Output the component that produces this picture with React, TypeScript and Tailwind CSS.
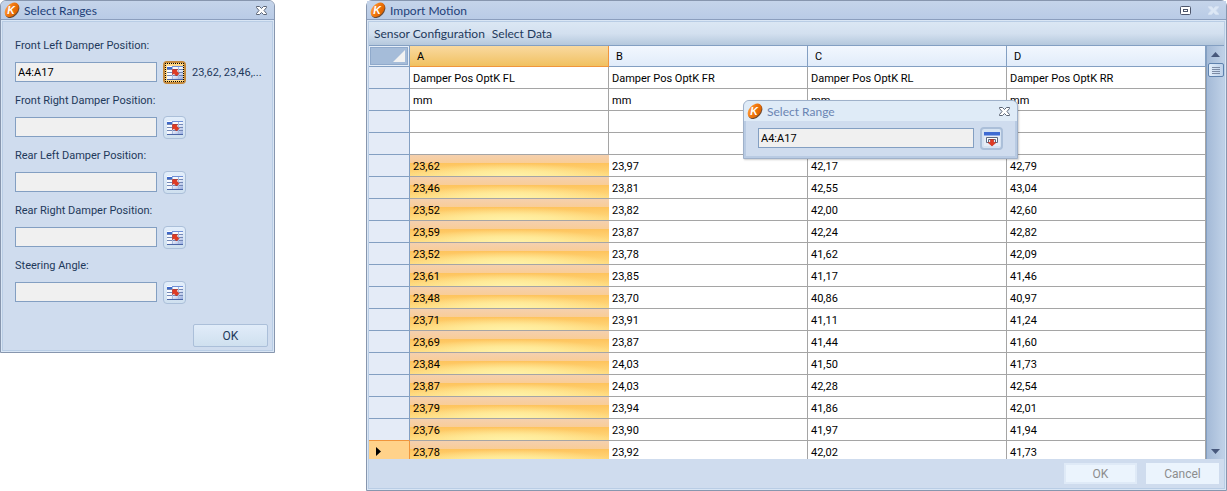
import { useState } from "react";

const columns = ["A", "B", "C", "D"];

const rows: string[][] = [
  ["Damper Pos OptK FL", "Damper Pos OptK FR", "Damper Pos OptK RL", "Damper Pos OptK RR"],
  ["mm", "mm", "mm", "mm"],
  ["", "", "", ""],
  ["", "", "", ""],
  ["23,62", "23,97", "42,17", "42,79"],
  ["23,46", "23,81", "42,55", "43,04"],
  ["23,52", "23,82", "42,00", "42,60"],
  ["23,59", "23,87", "42,24", "42,82"],
  ["23,52", "23,78", "41,62", "42,09"],
  ["23,61", "23,85", "41,17", "41,46"],
  ["23,48", "23,70", "40,86", "40,97"],
  ["23,71", "23,91", "41,11", "41,24"],
  ["23,69", "23,87", "41,44", "41,60"],
  ["23,84", "24,03", "41,50", "41,73"],
  ["23,87", "24,03", "42,28", "42,54"],
  ["23,79", "23,94", "41,86", "42,01"],
  ["23,76", "23,90", "41,97", "41,94"],
  ["23,78", "23,92", "42,02", "41,73"],
];

const FIRST_SELECTED = 4;
const CURRENT = rows.length - 1;

const fields = [
  { id: "fl", label: "Front Left Damper Position:", value: "A4:A17", preview: "23,62, 23,46,..." },
  { id: "fr", label: "Front Right Damper Position:", value: "" },
  { id: "rl", label: "Rear Left Damper Position:", value: "" },
  { id: "rr", label: "Rear Right Damper Position:", value: "" },
  { id: "steer", label: "Steering Angle:", value: "" },
];

function Logo() {
  return (
    <svg className="size-4 shrink-0" viewBox="0 0 16 16" aria-hidden="true">
      <defs>
        <linearGradient id="logo-face" x1="0" y1="0" x2="0.4" y2="1">
          <stop offset="0" stopColor="#ffa544" />
          <stop offset="0.5" stopColor="#f27a12" />
          <stop offset="1" stopColor="#e06400" />
        </linearGradient>
      </defs>
      <ellipse cx="8.4" cy="8.8" rx="8.4" ry="5.6" transform="rotate(-48 8.4 8.8)" fill="#6b4a34" />
      <ellipse cx="7.7" cy="7.8" rx="8.4" ry="5.6" transform="rotate(-48 7.7 7.8)" fill="url(#logo-face)" />
      <text x="3.2" y="11.8" fontSize="10.500" fontWeight="700" fontStyle="italic" fontFamily="Liberation Sans, sans-serif" fill="#fff">
        K
      </text>
    </svg>
  );
}

function CloseGlyph({ faded = false }: { faded?: boolean }) {
  return (
    <svg className="h-[9px] w-[11px]" viewBox="0 0 11 9" aria-hidden="true">
      <path
        d="M.5.5h3l2 2 2-2h3v1L8 4.500l2.500 3v1h-3l-2-2-2 2h-3v-1L3 4.500.5 1.500z"
        fill={faded ? "#dce7f5" : "#fff"}
        stroke={faded ? "#d3dff0" : "#5b6475"}
      />
    </svg>
  );
}

function GridArrowIcon() {
  return (
    <svg className="h-4 w-4" viewBox="0 0 16 16" aria-hidden="true">
      <defs>
        <linearGradient id="grid-shade" x1="0" y1="0" x2="1" y2="1">
          <stop offset="0" stopColor="#ffffff" />
          <stop offset="0.5" stopColor="#f4f7fd" />
          <stop offset="1" stopColor="#8ea4dc" />
        </linearGradient>
      </defs>
      <path d="M0 1h16v14H0z" fill="url(#grid-shade)" />
      <path d="M0 2h5v2H0z" fill="#3e68c8" />
      <path d="M5 1h11v1H5z" fill="#6f8fd6" />
      <path d="M0 4h16v1H0zM0 7h16v1H0zM0 10h16v1H0z" fill="#7388b6" />
      <path d="M0 14h16v1H0z" fill="#4c66a6" />
      <path d="M5 2h1v12H5zM11 2h1v12h-1z" fill="#a9bbdf" />
      <path d="M5.500 4.500h5L9.500 6l2.500 2.500-2.500 2.500L7 8.500l-1.500 1z" fill="#e23a22" stroke="#b92514" strokeWidth=".6" />
    </svg>
  );
}

function RestoreIcon() {
  return (
    <svg className="h-4 w-4" viewBox="0 0 16 16" aria-hidden="true">
      <rect y="1" width="16" height="14" fill="#e6ecf6" />
      <rect y="1" width="16" height="3" fill="#3f6bd2" />
      <rect y="4" width="16" height="1" fill="#8fabeb" />
      <path d="M2.500 11.500v-5h11v5h-2v-3h-7v3z" fill="#fff" stroke="#5d6880" />
      <path d="M6.500 8.500h3v3H12l-4 3.500-4-3.500h2.500z" fill="#e23a22" stroke="#b92514" strokeWidth=".6" />
    </svg>
  );
}

function TitleBar({ title, muted = false, disabled = false }: { title: string; muted?: boolean; disabled?: boolean }) {
  return (
    <header
      className={
        muted
          ? "flex h-5 items-center gap-1 bg-[#dfebf7] pr-[5px] pl-[3px] text-[#6b85b3]"
          : "flex h-[19px] items-center gap-1 border-b border-[#8b9ebd] bg-linear-to-b from-[#c5d4ea] to-[#b9cbe6] pr-[5px] pl-[3px] text-[#1e3f78]"
      }
    >
      <Logo />
      <h2 className="min-w-0 flex-1 truncate pt-0.5 font-['Lato',sans-serif] text-[12px] leading-4">{title}</h2>
      {disabled && (
        <button type="button" aria-label="Maximize" className="mr-2 grid h-4 w-4 place-items-center">
          <svg className="h-[9px] w-[11px]" viewBox="0 0 11 9" aria-hidden="true">
            <rect x=".5" y=".5" width="10" height="8" rx="1" fill="#fff" stroke="#4d566c" />
            <rect x="3.500" y="3.500" width="4" height="2" fill="#fff" stroke="#4d566c" />
          </svg>
        </button>
      )}
      <button type="button" aria-label="Close" disabled={disabled} className="grid h-4 w-4 place-items-center">
        <CloseGlyph faded={disabled} />
      </button>
    </header>
  );
}

function SelectRanges() {
  const [active, setActive] = useState("fl");
  return (
    <section className="w-[275px] shrink-0 overflow-hidden rounded-t-md border border-[#8796ae] bg-[#d9e6f5] text-[#1e395b]">
      <TitleBar title="Select Ranges" />
      <form className="m-px border border-[#b9cde5] bg-[#cfdcee] px-3 pt-4 pb-[3px]" onSubmit={(e) => e.preventDefault()}>
        {fields.map((f) => (
          <div key={f.id} className="h-[55px]">
            <label htmlFor={f.id} className="block h-4 leading-4">
              {f.label}
            </label>
            <div className="mt-[7px] flex items-start">
              <input
                id={f.id}
                readOnly
                defaultValue={f.value}
                className="mt-px h-5 w-[142px] border border-[#839fc2] bg-[#f0f0f0] px-0.5 text-black outline-none"
              />
              <button
                type="button"
                aria-label={"Pick range for " + f.label}
                onClick={() => setActive(f.id)}
                className={
                  active === f.id
                    ? "ml-1.5 grid size-[23px] place-items-center rounded-sm border-2 border-[#c58a3c] bg-[#ffd98a]"
                    : "ml-1.5 grid size-[23px] place-items-center rounded-sm border border-[#abbfd9] bg-linear-to-b from-[#e3eefb] to-[#cfe0ef]"
                }
              >
                <span className={active === f.id ? "grid size-[19px] place-items-center outline-1 -outline-offset-1 outline-dotted outline-black" : ""}>
                  <GridArrowIcon />
                </span>
              </button>
              {f.preview && <output className="ml-1.5 pt-1 whitespace-nowrap">{f.preview}</output>}
            </div>
          </div>
        ))}
        <div className="-mr-2 flex justify-end pt-[11px]">
          <button
            type="submit"
            className="h-[23px] w-[75px] rounded-xs border border-[#abbfd9] bg-linear-to-b from-[#e1ecf9] to-[#cfe0ef] text-[12px]"
          >
            OK
          </button>
        </div>
      </form>
    </section>
  );
}

function MotionTable() {
  return (
    <table className="w-full table-fixed border-separate border-spacing-0 text-left text-black">
      <colgroup>
        <col className="w-[41px]" />
        {columns.map((c) => (
          <col key={c} />
        ))}
      </colgroup>
      <thead>
        <tr className="h-[21px]">
          <th aria-label="Select all" className="border-r border-b border-[#839fc2] bg-[#e6eef8] p-px">
            <div className="flex h-[18px] items-end justify-end border border-[#8fa9cb] bg-[#a5bcd9] p-0.5">
              <svg className="size-3" viewBox="0 0 12 12" aria-hidden="true">
                <path d="M12 0v12H0z" fill="#f2f2f2" />
              </svg>
            </div>
          </th>
          {columns.map((c, i) => (
            <th
              key={c}
              scope="col"
              className={
                i === 0
                  ? "border-r border-b border-[#f0953c] bg-linear-to-b from-[#f9d99f] to-[#f1c15f] p-0 pt-px pl-[7px] font-normal"
                  : "border-r border-b border-[#839fc2] bg-linear-to-b from-[#f2f7fe] to-[#e1ecfa] p-0 pt-px pl-[7px] font-normal"
              }
            >
              {c}
            </th>
          ))}
        </tr>
      </thead>
      <tbody>
        {rows.map((row, r) => (
          <tr key={r} className="h-[22px]">
            <th
              scope="row"
              aria-label={"Row " + r}
              className={
                r === CURRENT
                  ? "border-r border-b border-[#f0953c] bg-[#ffd28a] p-0"
                  : r === CURRENT - 1
                    ? "border-r border-b border-r-[#839fc2] border-b-[#f0953c] bg-[#e4ebf7] p-0"
                    : "border-r border-b border-[#839fc2] bg-[#e4ebf7] p-0"
              }
            >
              {r === CURRENT && (
                <svg className="ml-[7px] h-[9px] w-[5px]" viewBox="0 0 5 9" aria-hidden="true">
                  <path d="M0 0v9l5-4.500z" fill="#000" />
                </svg>
              )}
            </th>
            {row.map((value, c) => (
              <td
                key={c}
                className={
                  c === 0 && r >= FIRST_SELECTED
                    ? "border-b border-[#a5a5a5] bg-[radial-gradient(ellipse_52%_60%_at_50%_100%,#fff2a8_0%,#fff0a2c0_45%,#ffe89000_100%),linear-gradient(to_bottom,#f5d0ae_0px,#f9cd97_8px,#fec35c_8px,#ffdc82_21px)] p-0 pt-0.5 pl-[3px]"
                    : "border-r border-b border-[#a5a5a5] bg-white p-0 pt-0.5 pl-[3px]"
                }
              >
                {value}
              </td>
            ))}
          </tr>
        ))}
      </tbody>
    </table>
  );
}

function ScrollBar() {
  return (
    <div className="flex w-[18px] shrink-0 flex-col items-center border-l border-[#839fc2] bg-linear-to-r from-[#a4bad7] to-[#bfd1e7]">
      <button type="button" aria-label="Scroll up" className="grid h-[17px] w-full place-items-center">
        <svg className="h-[5px] w-[9px]" viewBox="0 0 9 5" aria-hidden="true">
          <path d="M0 5 4.500 0 9 5z" fill="#47587c" />
        </svg>
      </button>
      <div className="flex h-[14px] w-4 flex-col items-center justify-center gap-px rounded-xs border border-[#5f82ae] bg-linear-to-r from-[#e3eefa] to-[#bdd1ea]">
        <i className="h-px w-2 bg-[#7c8ba5]" />
        <i className="h-px w-2 bg-[#7c8ba5]" />
        <i className="h-px w-2 bg-[#7c8ba5]" />
        <i className="h-px w-2 bg-[#7c8ba5]" />
      </div>
      <button type="button" aria-label="Scroll down" className="mt-auto grid h-[15px] w-full place-items-center">
        <svg className="h-[5px] w-[9px]" viewBox="0 0 9 5" aria-hidden="true">
          <path d="M0 0h9L4.500 5z" fill="#47587c" />
        </svg>
      </button>
    </div>
  );
}

function SelectRangePopup() {
  return (
    <section className="absolute top-[99px] left-[376px] w-[275px] overflow-hidden rounded-t-md border border-[#9fb1ca] bg-[#b9cbe3] shadow-[1px_1px_2px_#0003]">
      <TitleBar title="Select Range" muted />
      <div className="mx-0.5 mb-0.5 flex items-start bg-[#cfdcee] px-3 py-[6px]">
        <input
          aria-label="Range"
          readOnly
          defaultValue="A4:A17"
          className="mt-px h-5 min-w-0 flex-1 border border-[#839fc2] bg-[#f0f0f0] px-0.5 text-black outline-none"
        />
        <button
          type="button"
          aria-label="Confirm range"
          className="ml-1.5 grid size-[23px] place-items-center rounded-sm border-2 border-[#abbfd9] bg-[#d6e3f2]"
        >
          <RestoreIcon />
        </button>
      </div>
    </section>
  );
}

function ImportMotion() {
  return (
    <section className="relative flex min-w-0 flex-1 flex-col rounded-t-md border border-[#8796ae] bg-[#d9e6f5] text-[#1e395b]">
      <TitleBar title="Import Motion" disabled />
      <div className="m-px flex min-h-0 flex-1 flex-col border border-[#b9cde5] bg-[#cfdcee]">
        <nav className="flex h-6 shrink-0 items-center gap-[7px] border-b border-[#839fc2] bg-linear-to-b from-[#dbe7f4] via-[#d3e0ef] to-[#b5c8dd] px-[5px] font-['Lato',sans-serif] text-[12px]">
          <button type="button">Sensor Configuration</button>
          <button type="button">Select Data</button>
        </nav>
        <div className="flex min-h-0 flex-1">
          <div className="min-w-0 flex-1 overflow-hidden">
            <MotionTable />
          </div>
          <ScrollBar />
        </div>
        <footer className="flex shrink-0 justify-end gap-[9px] px-[5px] py-1">
          <button type="button" disabled className="h-[21px] w-[73px] border-2 border-[#dfeaf7] bg-[#ebf4fd] text-[12px] leading-4 text-[#8d8d8d]">
            OK
          </button>
          <button type="button" disabled className="h-[21px] w-[73px] bg-[#ebf4fd] text-[12px] leading-4 text-[#8d8d8d]">
            Cancel
          </button>
        </footer>
      </div>
      <SelectRangePopup />
    </section>
  );
}

export default function App() {
  return (
    <main className="flex h-screen items-start gap-[91px] bg-white font-['Roboto',sans-serif] text-[11px] leading-4">
      <SelectRanges />
      <div className="flex h-full min-w-0 flex-1">
        <ImportMotion />
      </div>
    </main>
  );
}
